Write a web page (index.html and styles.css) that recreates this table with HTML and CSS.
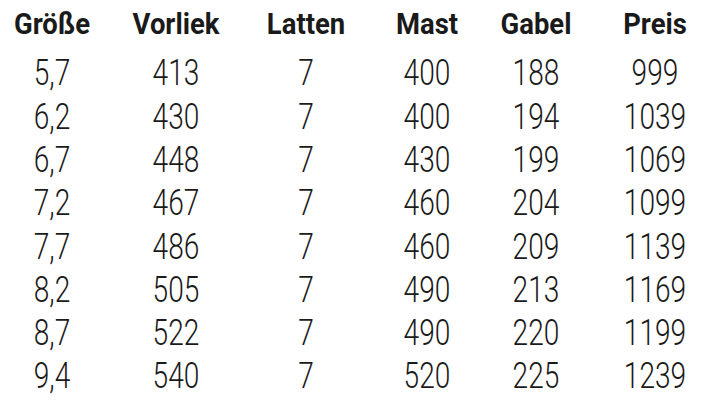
FILE: index.html
```html
<!DOCTYPE html>
<html lang="de">
<head>
<meta charset="utf-8">
<link rel="stylesheet" href="styles.css">
</head>
<body>
<div class="table">
  <div class="th">Größe</div><div class="th">Vorliek</div><div class="th">Latten</div><div class="th">Mast</div><div class="th">Gabel</div><div class="th">Preis</div>
  <div class="td">5,7</div><div class="td">413</div><div class="td">7</div><div class="td">400</div><div class="td">188</div><div class="td">999</div>
  <div class="td">6,2</div><div class="td">430</div><div class="td">7</div><div class="td">400</div><div class="td">194</div><div class="td">1039</div>
  <div class="td">6,7</div><div class="td">448</div><div class="td">7</div><div class="td">430</div><div class="td">199</div><div class="td">1069</div>
  <div class="td">7,2</div><div class="td">467</div><div class="td">7</div><div class="td">460</div><div class="td">204</div><div class="td">1099</div>
  <div class="td">7,7</div><div class="td">486</div><div class="td">7</div><div class="td">460</div><div class="td">209</div><div class="td">1139</div>
  <div class="td">8,2</div><div class="td">505</div><div class="td">7</div><div class="td">490</div><div class="td">213</div><div class="td">1169</div>
  <div class="td">8,7</div><div class="td">522</div><div class="td">7</div><div class="td">490</div><div class="td">220</div><div class="td">1199</div>
  <div class="td">9,4</div><div class="td">540</div><div class="td">7</div><div class="td">520</div><div class="td">225</div><div class="td">1239</div>
</div>
</body>
</html>
```

FILE: styles.css
```css
html, body {
  margin: 0;
  padding: 0;
  background: #ffffff;
}
body {
  width: 712px;
  height: 409px;
  overflow: hidden;
  font-family: Roboto, "DejaVu Sans Condensed", sans-serif;
  color: #1a1a1a;
}
.table {
  display: grid;
  grid-template-columns: 100px 108px 112px 90px 88px 110px;
  grid-template-rows: 51.4px repeat(8, 43.3px);
  column-gap: 20px;
  padding-left: 2px;
}
.th {
  font-weight: 700;
  font-size: 29.5px;
  line-height: 49px;
  text-align: center;
  transform: scaleX(0.93);
}
.td {
  font-size: 36.5px;
  line-height: 43.3px;
  font-weight: 300;
  text-align: center;
  transform: scaleX(0.77);
}
```
